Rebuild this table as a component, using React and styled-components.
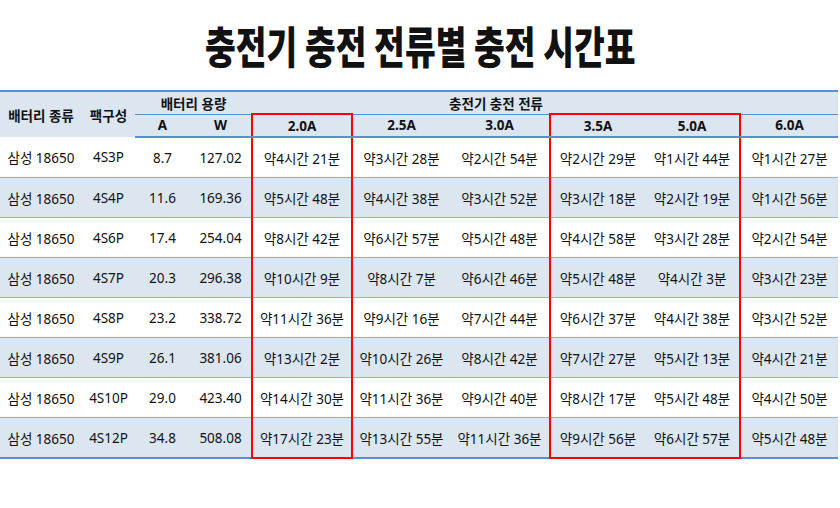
import React from 'react';
import styled, { createGlobalStyle } from 'styled-components';

const GlobalStyle = createGlobalStyle`
    body {
        margin: 0;
        background: #ffffff;
        font-family: "Noto Sans", "Noto Sans CJK KR", sans-serif;
        color: #111111;
    }
`

const Page = styled.div`
    width: 840px;
    height: 508px;
    display: flex;
    flex-direction: column;
`
const TitleBar = styled.div`
    height: 90px;
    display: flex;
    justify-content: center;
    align-items: center;
`
const Title = styled.h1`
    margin: 0;
    font-family: "Noto Sans CJK KR", sans-serif;
    font-weight: 900;
    font-size: 44px;
    letter-spacing: 0;
    transform: scaleX(0.76);
    white-space: nowrap;
`
const Table = styled.table`
    width: 838px;
    border-collapse: collapse;
    table-layout: fixed;
    font-size: 13.5px;
    border-top: 2px solid #5a8fd8;
`
const HeadCell = styled.th`
    background-color: #dce6f1;
    font-weight: 700;
    font-size: 13.5px;
    height: 21px;
    padding: 0;
    text-align: center;
    vertical-align: middle;
    border-bottom: ${p => (p.$line ? '1px solid #5a8fd8' : 'none')};
    border-top: ${p => (p.$red ? '2px solid #ff0000' : 'none')};
    border-left: ${p => (p.$redLeft ? '2px solid #ff0000' : 'none')};
    border-right: ${p => (p.$redRight ? '2px solid #ff0000' : 'none')};
`
const HeadRow = styled.tr`
    &:last-child th {
        border-bottom: 2px solid #5a8fd8;
    }
`
const Row = styled.tr`
    background-color: ${p => (p.$shade ? '#dce6f1' : '#ffffff')};
    border-bottom: 1px solid #8db3e2;

    &:last-child {
        border-bottom: 2px solid #5a8fd8;
    }
`
const Cell = styled.td`
    height: 39px;
    padding: 0;
    text-align: center;
    white-space: nowrap;
    border-left: ${p => (p.$redLeft ? '2px solid #ff0000' : 'none')};
    border-right: ${p => (p.$redRight ? '2px solid #ff0000' : 'none')};
    border-bottom: ${p => (p.$redBottom ? '2px solid #ff0000' : 'none')};
`

const currents = ['2.0A', '2.5A', '3.0A', '3.5A', '5.0A', '6.0A']
const redLeft = [true, false, false, true, false, false]
const redRight = [true, false, false, false, true, false]
const redCol = [true, false, false, true, true, false]

const rows = [
    ['4S3P', '8.7', '127.02', ['약4시간 21분', '약3시간 28분', '약2시간 54분', '약2시간 29분', '약1시간 44분', '약1시간 27분']],
    ['4S4P', '11.6', '169.36', ['약5시간 48분', '약4시간 38분', '약3시간 52분', '약3시간 18분', '약2시간 19분', '약1시간 56분']],
    ['4S6P', '17.4', '254.04', ['약8시간 42분', '약6시간 57분', '약5시간 48분', '약4시간 58분', '약3시간 28분', '약2시간 54분']],
    ['4S7P', '20.3', '296.38', ['약10시간 9분', '약8시간 7분', '약6시간 46분', '약5시간 48분', '약4시간 3분', '약3시간 23분']],
    ['4S8P', '23.2', '338.72', ['약11시간 36분', '약9시간 16분', '약7시간 44분', '약6시간 37분', '약4시간 38분', '약3시간 52분']],
    ['4S9P', '26.1', '381.06', ['약13시간 2분', '약10시간 26분', '약8시간 42분', '약7시간 27분', '약5시간 13분', '약4시간 21분']],
    ['4S10P', '29.0', '423.40', ['약14시간 30분', '약11시간 36분', '약9시간 40분', '약8시간 17분', '약5시간 48분', '약4시간 50분']],
    ['4S12P', '34.8', '508.08', ['약17시간 23분', '약13시간 55분', '약11시간 36분', '약9시간 56분', '약6시간 57분', '약5시간 48분']],
]

const widths = [82, 53, 55, 62, 100, 98, 100, 95, 95, 98]

const App = () => {
    return (
        <Page>
            <GlobalStyle />
            <TitleBar>
                <Title>충전기 충전 전류별 충전 시간표</Title>
            </TitleBar>
            <Table>
                <colgroup>
                    {widths.map((w, i) => <col key={i} style={{ width: w }} />)}
                </colgroup>
                <thead>
                    <HeadRow>
                        <HeadCell rowSpan={2}>배터리 종류</HeadCell>
                        <HeadCell rowSpan={2}>팩구성</HeadCell>
                        <HeadCell colSpan={2} $line>배터리 용량</HeadCell>
                        <HeadCell colSpan={5} $line>충전기 충전 전류</HeadCell>
                        <HeadCell $line></HeadCell>
                    </HeadRow>
                    <HeadRow>
                        <HeadCell>A</HeadCell>
                        <HeadCell>W</HeadCell>
                        {currents.map((c, i) => (
                            <HeadCell key={c} $red={redCol[i]} $redLeft={redLeft[i]} $redRight={redRight[i]}>
                                {c}
                            </HeadCell>
                        ))}
                    </HeadRow>
                </thead>
                <tbody>
                    {rows.map((r, ri) => (
                        <Row key={r[0]} $shade={ri % 2 === 1}>
                            <Cell>삼성 18650</Cell>
                            <Cell>{r[0]}</Cell>
                            <Cell>{r[1]}</Cell>
                            <Cell>{r[2]}</Cell>
                            {r[3].map((t, i) => (
                                <Cell
                                    key={i}
                                    $redLeft={redLeft[i]}
                                    $redRight={redRight[i]}
                                    $redBottom={ri === rows.length - 1 && redCol[i]}
                                >
                                    {t}
                                </Cell>
                            ))}
                        </Row>
                    ))}
                </tbody>
            </Table>
        </Page>
    )
}

export default App;
